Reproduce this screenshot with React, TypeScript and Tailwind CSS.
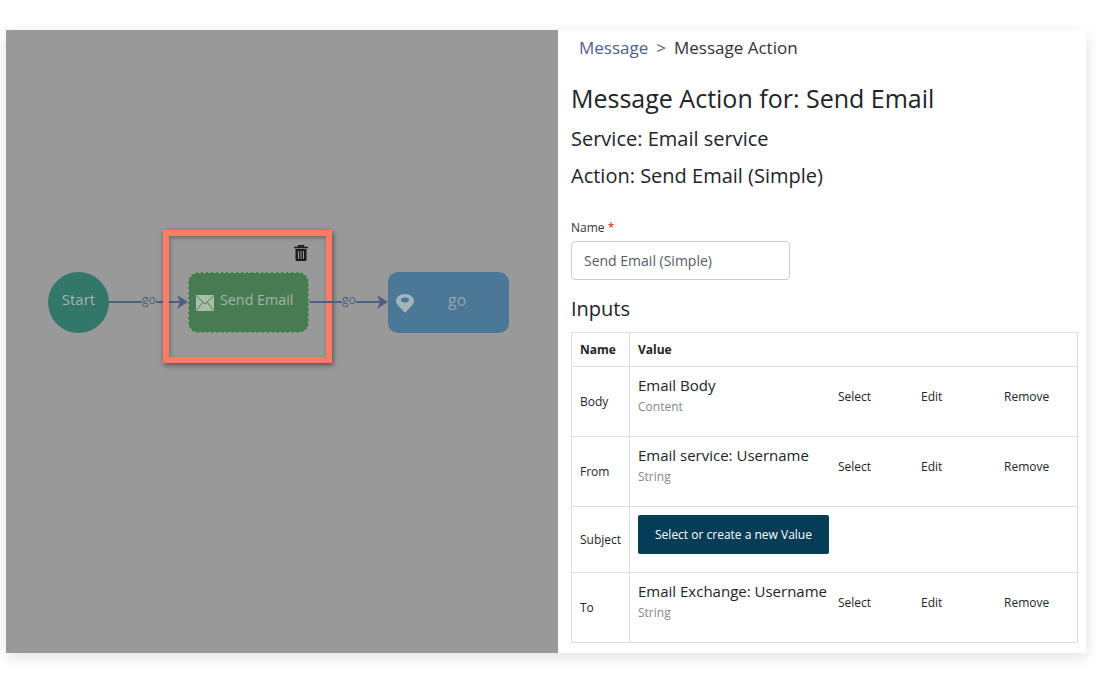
const rows = [
  { name: "Body", title: "Email Body", type: "Content", h: "h-[70px]" },
  { name: "From", title: "Email service: Username", type: "String", h: "h-[70px]" },
  { name: "Subject", h: "h-[66px]" },
  { name: "To", title: "Email Exchange: Username", type: "String", h: "h-[70px]" },
];

function Edge({ left, width }: { left: string; width: string }) {
  return (
    <div className={`absolute top-[292px] flex h-5 items-center ${left} ${width}`}>
      <div className="h-[2px] flex-1 bg-[#4d6080]" />
      <svg width="11" height="14" viewBox="0 0 11 14" className="-ml-1 shrink-0">
        <path d="M0 0 L11 7 L0 14 L3 7 Z" fill="#4d6080" />
      </svg>
      <span className="absolute left-[33px] top-[-2px] bg-[#999999] text-[12px] leading-5 text-[#4d6080]">go</span>
    </div>
  );
}

export default function App() {
  return (
    <div className="h-[693px] w-[1096px] overflow-hidden bg-white pl-[6px] pt-[30px] font-['Open_Sans',sans-serif] text-[#212529]">
      <div className="flex h-[623px] w-[1080px] bg-white shadow-[0_4px_14px_rgba(0,0,0,0.12)]">
        <div className="relative h-full w-[552px] shrink-0 -translate-y-[30px] bg-transparent">
          <div className="absolute left-0 top-[30px] h-[623px] w-[552px] bg-[#999999]" />
          <div className="absolute left-[42px] top-[272px] flex h-[61px] w-[61px] items-center justify-center rounded-full bg-[#33766a] text-[15px] text-[#a3b5ad]">
            <span className="-mt-[7px]">Start</span>
          </div>
          <Edge left="left-[103px]" width="w-[79px]" />
          <div className="absolute left-[182px] top-[272px] flex h-[61px] w-[121px] items-start rounded-[10px] border border-dashed border-[#8fae94] bg-[#477c52] pl-[7px] text-[14.3px] text-[#a3b3a3]">
            <svg width="18" height="16" viewBox="0 0 18 16" className="mt-[22px] shrink-0">
              <path d="M0 0 H18 V16 H0 Z" fill="#a9bfa9" />
              <path d="M0.5 0.8 L9 9 L17.5 0.8 M0.5 15.4 L6.5 7.5 M17.5 15.4 L11.5 7.5" fill="none" stroke="#477c52" strokeWidth="1" />
            </svg>
            <span className="ml-[6px] mt-[17px] leading-5">Send Email</span>
          </div>
          <div className="absolute left-[157px] top-[230px] h-[133px] w-[169px] border-[6px] border-[#ff7b65] shadow-[1px_2px_5px_rgba(0,0,0,0.5),inset_1px_2px_4px_rgba(0,0,0,0.3)]" />
          <svg width="14" height="16" viewBox="0 0 14 16" className="absolute left-[288px] top-[245px]">
            <path d="M4.5 2 V0.7 H9.5 V2 M0 2.5 H14" fill="none" stroke="#1a1a1a" strokeWidth="1.6" />
            <path d="M1.5 4 H12.5 V14.5 Q12.5 16 11 16 H3 Q1.5 16 1.5 14.5 Z" fill="#1a1a1a" />
            <path d="M4.5 6 V14 M7 6 V14 M9.5 6 V14" stroke="#999999" strokeWidth="1.1" />
          </svg>
          <Edge left="left-[303px]" width="w-[79px]" />
          <div className="absolute left-[382px] top-[272px] flex h-[61px] w-[121px] items-center rounded-[10px] bg-[#4a7896] pl-[8px] text-[16px] text-[#96a6b0]">
            <svg width="18" height="19" viewBox="0 0 18 19" className="mt-[2px] shrink-0">
              <path d="M9 0 C14 0 18 2.8 18 7 C18 11 12 15 9 19 C6 15 0 11 0 7 C0 2.8 4 0 9 0 Z" fill="#a5b2b8" />
              <ellipse cx="9" cy="6" rx="4" ry="2.5" fill="#4a7896" />
            </svg>
            <span className="ml-[34px] -mt-[6px]">go</span>
          </div>
        </div>

        <div className="flex-1 pl-[13px] pr-2">
          <div className="flex h-[36px] items-center pb-[1px] pl-2 text-[17px] leading-6">
            <span className="text-[#4e5f8a]">Message</span>
            <span className="ml-2 text-[#4e5f8a]">&gt;</span>
            <span className="ml-2 text-[#333333]">Message Action</span>
          </div>
          <h1 className="mt-[15px] text-[25px] leading-[34px]">Message Action for: Send Email</h1>
          <h2 className="mt-[9px] text-[20px] leading-[30px]">Service: Email service</h2>
          <h2 className="mt-[7px] text-[20px] leading-[30px]">Action: Send Email (Simple)</h2>

          <label className="mt-[28px] block text-[12px] leading-[18px] text-[#333333]">
            Name <span className="text-[#e02020]">*</span>
          </label>
          <div className="mt-[4px] flex h-[39px] w-[219px] items-center rounded-[4px] border border-[#cccccc] px-3 text-[14px] text-[#555b66]">
            Send Email (Simple)
          </div>
          <h2 className="mt-[14px] text-[20px] leading-[30px]">Inputs</h2>

          <table className="mt-[8px] w-[507px] table-fixed border-collapse text-[12px]">
            <thead>
              <tr className="h-[34px]">
                <th className="w-[58px] border border-[#dddddd] pl-2 text-left font-bold">Name</th>
                <th className="border border-[#dddddd] pl-2 text-left font-bold">Value</th>
              </tr>
            </thead>
            <tbody>
              {rows.map((r) => (
                <tr key={r.name} className={r.h}>
                  <td className="border border-[#dddddd] pl-2 pt-[1px]">{r.name}</td>
                  <td className="border border-[#dddddd] pl-2 align-top">
                    {r.title ? (
                      <div className="flex">
                        <div className="w-[200px] shrink-0 pt-[7px]">
                          <div className="whitespace-nowrap text-[15px] leading-[22px]">{r.title}</div>
                          <div className="pt-[1px] leading-5 text-[#888888]">{r.type}</div>
                        </div>
                        <div className="flex flex-1 pt-[20px] leading-5">
                          <span className="w-[83px]">Select</span>
                          <span className="w-[83px]">Edit</span>
                          <span>Remove</span>
                        </div>
                      </div>
                    ) : (
                      <button className="mt-[8px] h-[39px] w-[191px] rounded-[2px] bg-[#053d57] text-center text-[12px] text-white">
                        Select or create a new Value
                      </button>
                    )}
                  </td>
                </tr>
              ))}
            </tbody>
          </table>
        </div>
      </div>
    </div>
  );
}
